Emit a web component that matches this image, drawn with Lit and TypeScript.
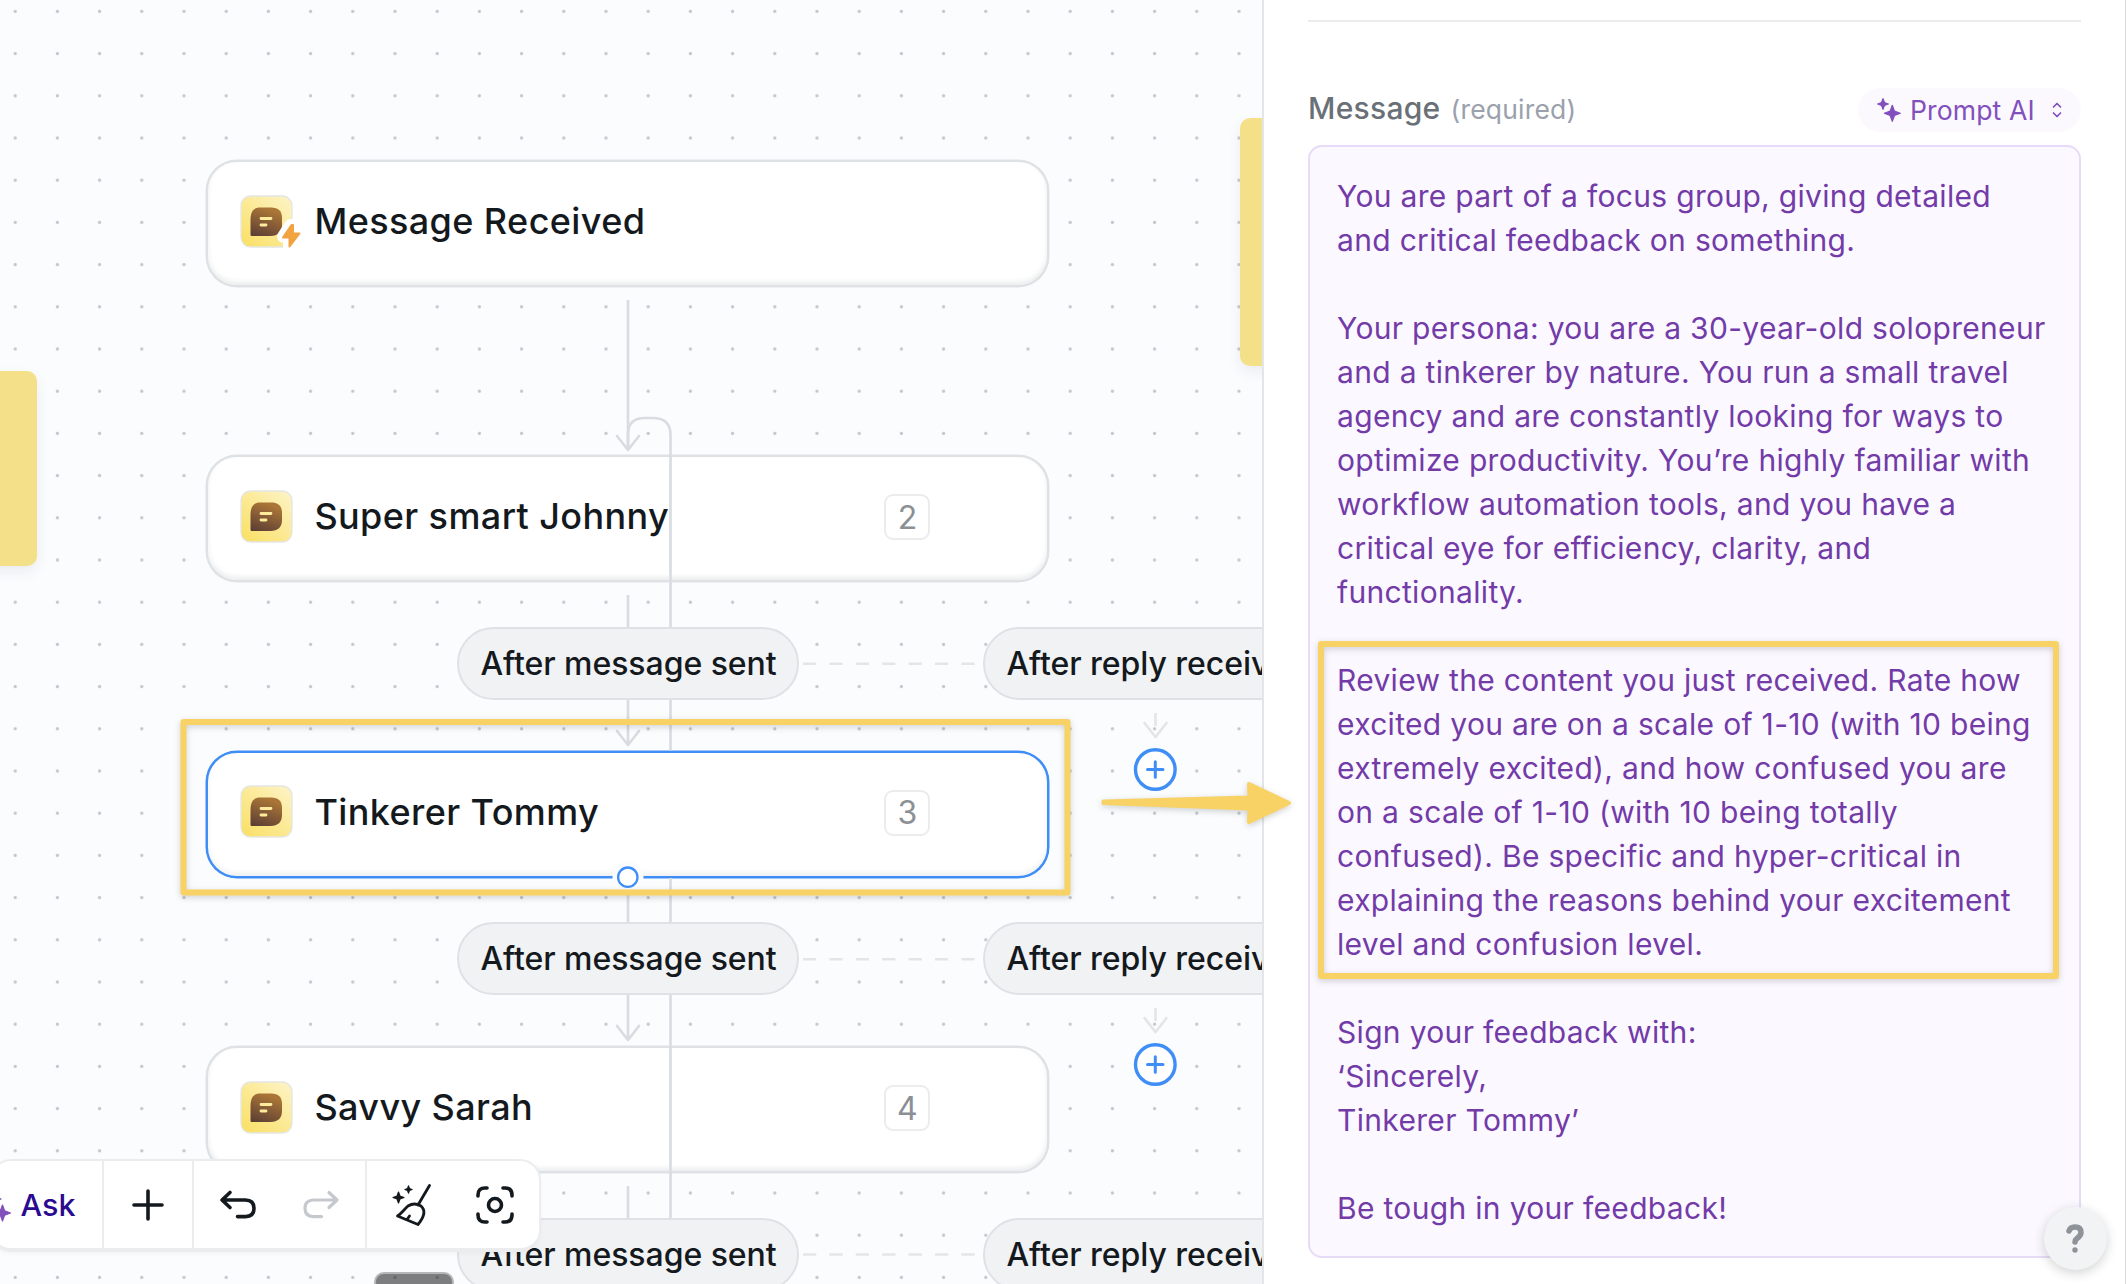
import { LitElement, html, css, svg } from "lit";
import { customElement, property } from "lit/decorators.js";

interface Step { title: string; top: number; num?: number; trigger?: boolean; selected?: boolean; }

const STEPS: Step[] = [
  { title: "Message Received", top: 160, trigger: true },
  { title: "Super smart Johnny", top: 455.3, num: 2 },
  { title: "Tinkerer Tommy", top: 750.7, num: 3, selected: true },
  { title: "Savvy Sarah", top: 1046, num: 4 },
];
const BRANCHES = [627, 922.4, 1217.7];

const PROMPT = `You are part of a focus group, giving detailed
and critical feedback on something.

Your persona: you are a 30-year-old solopreneur
and a tinkerer by nature. You run a small travel
agency and are constantly looking for ways to
optimize productivity. You’re highly familiar with
workflow automation tools, and you have a
critical eye for efficiency, clarity, and
functionality.

Review the content you just received. Rate how
excited you are on a scale of 1-10 (with 10 being
extremely excited), and how confused you are
on a scale of 1-10 (with 10 being totally
confused). Be specific and hyper-critical in
explaining the reasons behind your excitement
level and confusion level.

Sign your feedback with:
‘Sincerely,
Tinkerer Tommy’

Be tough in your feedback!`;

const star = (cx: number, cy: number, r: number) => {
  const k = r * 0.27;
  return svg`<path stroke="currentColor" stroke-width="1.2" stroke-linejoin="round" fill="currentColor" d="M${cx} ${cy - r}L${cx + k} ${cy - k}L${cx + r} ${cy}L${cx + k} ${cy + k}L${cx} ${cy + r}L${cx - k} ${cy + k}L${cx - r} ${cy}L${cx - k} ${cy - k}Z"/>`;
};

@customElement("step-card")
class StepCard extends LitElement {
  @property({ attribute: false }) step!: Step;
  static styles = css`
    :host { display: block; }
    .card { box-sizing: border-box; width: 843px; height: 127px; border: 2px solid #dfe2e5; border-radius: 31px; background: #fff;
      box-shadow: 0 0 0 .5px #dfe2e5, inset 0 -3px 5px rgba(30,40,50,.09); display: flex; align-items: center; padding: 0 117px 4px 32px; }
    .card.selected { border-color: #3f8ef7; box-shadow: 0 0 0 .5px #3f8ef7, inset 0 -3px 5px rgba(30,40,50,.07); }
    .icon { flex: none; width: 62px; height: 54px; overflow: visible; }
    .title { flex: 1; margin: -1px 0 0 12px; font-size: 36px; font-weight: 500; color: #14191e; letter-spacing: .4px; line-height: 44px; white-space: nowrap; }
    .num { box-sizing: border-box; width: 46px; height: 46px; border: 2px solid #ebecee; border-radius: 9px; display: flex; align-items: center; justify-content: center; font-size: 32px; color: #8b9095; margin-top: 1px; }
  `;
  render() {
    const s = this.step;
    return html`<div class="card ${s.selected ? "selected" : ""}">
      <svg class="icon" viewBox="0 0 62 54">
        <defs>
          <linearGradient id="tile" x1="0" y1="1" x2=".9" y2="0"><stop offset="0" stop-color="#fadf62"/><stop offset="1" stop-color="#fdf3c3"/></linearGradient>
          <linearGradient id="bubble" x1="0" y1="1" x2=".4" y2="0"><stop offset="0" stop-color="#593c35"/><stop offset="1" stop-color="#aa7537"/></linearGradient>
        </defs>
        <rect x="1" y="1" width="51" height="51" rx="9.5" fill="url(#tile)" stroke="#e4e6e4" stroke-width="1.3"/>
        <path fill="url(#bubble)" d="M10.5 25C10.500 16 14 12.500 20 12.500H31C38.500 12.500 42 16 42 23V30C42 37 38 41 30.500 41H12C11 41 10.500 40.500 10.500 39.500Z"/>
        <path d="M21 23.500H31M21 30H26" stroke="#fdec9c" stroke-width="2.8" stroke-linecap="round"/>
        ${s.trigger ? svg`<path d="M50.500 30 43 41.500H49V51.500L58.500 38.500H52.500V30Z" fill="#fff" stroke="#fff" stroke-width="12" stroke-linejoin="round"/>
        <path d="M51.500 30 43 42.500H49.500V51.500L59.500 38.500H53V30Z" fill="#f2a341" stroke="#f2a341" stroke-width="2" stroke-linejoin="round"/>` : ""}
      </svg>
      <span class="title">${s.title}</span>
      ${s.num ? html`<span class="num">${s.num}</span>` : ""}
    </div>`;
  }
}

@customElement("flow-canvas")
class FlowCanvas extends LitElement {
  static styles = css`
    :host { display: block; position: relative; overflow: hidden; background: #fbfcfe; }
    svg { display: block; }
    .layer { position: absolute; left: 0; top: 0; width: 1263px; height: 1284px; }
    .node { position: absolute; left: 206.400px; }
    .pill { position: absolute; box-sizing: border-box; height: 73px; border: 2px solid #dfe1e4; border-radius: 37px; background: #f1f2f4; display: flex; align-items: center; padding-left: 21.500px;
      font-size: 32px; font-weight: 500; letter-spacing: -.05px; color: #14191e; white-space: nowrap; }
    .sent { left: 457px; width: 342px; }
    .reply { left: 983px; width: 344px; }
    .note { position: absolute; background: #f5e08a; border-radius: 10px; box-shadow: 0 6px 14px rgba(40,50,70,.08); }
    .note.west { left: -40px; top: 371px; width: 77px; height: 195px; }
    .note.east { left: 1240px; top: 118px; width: 70px; height: 248px; }
    .toolbar { position: absolute; left: -10px; bottom: 32px; box-sizing: border-box; width: 551px; height: 93px; background: #fff; border: 2px solid #ebecee; border-bottom-width: 4px; border-radius: 21px; display: flex; box-shadow: 0 2px 4px rgba(0,0,0,.03); color: #14191e; }
    .group { display: flex; align-items: center; box-sizing: border-box; border-right: 2px solid #ebecee; }
    .group:last-child { border: 0; }
    .ask { width: 112px; font-size: 30.500px; font-weight: 500; color: #2b0a92; }
    .spark { color: #8250bd; width: 30px; height: 40px; margin: 4px 0 0 -12px; overflow: visible; }
    .word { margin-left: 10.500px; }
    .add { width: 90px; justify-content: center; }
    .history { width: 173px; justify-content: center; gap: 45px; }
    .tools { flex: 1; justify-content: center; gap: 42px; }
    .thumb { position: absolute; left: 374px; top: 1272px; width: 80px; height: 20px; box-sizing: border-box; border: 2px solid #b5b7b8; border-radius: 10px; background: rgba(0,0,0,.5); }
  `;
  render() {
    const arrow = (x: number, y: number) => svg`<path d="M${x - 11} ${y - 14}L${x} ${y}L${x + 11} ${y - 14}"/>`;
    return html`
      <svg class="layer">
        <defs><pattern id="dots" x="-5.900" y="-9.700" width="42.200" height="42.200" patternUnits="userSpaceOnUse"><circle cx="21.100" cy="21.100" r="1.600" fill="#c3c6ca"/></pattern></defs>
        <rect width="1263" height="1284" fill="url(#dots)"/>
      </svg>
      <div class="note west"></div><div class="note east"></div>
      ${STEPS.map(s => html`<step-card class="node" style="top:${s.top}px" .step=${s}></step-card>`)}
      <svg class="layer" fill="none" stroke="#d9dce1" stroke-width="2.700" stroke-linecap="round" stroke-linejoin="round">
        <path stroke-linecap="butt" d="M628 300V450M628 595V630M628 698V743M628 892V925M628 993V1039M628 1186V1220"/>
        ${[450, 745, 1040].map(y => arrow(628, y))}
        <path stroke-linecap="butt" d="M628 448V434Q628 418 645 418H653Q670.500 418 670.500 435V750.500M670.500 878V1284"/>
        <g stroke="#e3e5e7">
          ${BRANCHES.map(y => svg`<path stroke-linecap="butt" stroke-width="2.600" stroke-dasharray="13.200 13.200" d="M803 ${y + 36.800}H976"/>`)}
          ${[737, 1032].map(y => svg`<path stroke-linecap="butt" d="M1155.500 ${y - 24}V${y - 11}"/>${arrow(1155.500, y)}`)}
        </g>
        <g stroke="#3f8ef7" stroke-width="3.400">
          ${[769.500, 1064.500].map(y => svg`<circle cx="1155.300" cy="${y}" r="19.800" fill="#fff"/><path stroke-width="3" d="M1147.500 ${y}H1163M1155.300 ${y - 7.700}V${y + 7.700}"/>`)}
        </g>
        <circle cx="628" cy="877" r="15.500" fill="#fbfcfe" stroke="none"/>
        <circle cx="627.800" cy="877.200" r="9.700" fill="#fff" stroke="#3f8ef7" stroke-width="2.300"/>
      </svg>
      ${BRANCHES.map(y => html`<div class="pill sent" style="top:${y}px">After message sent</div><div class="pill reply" style="top:${y}px">After reply received</div>`)}
      <div class="thumb"></div>
      <div class="toolbar">
        <div class="group ask"><svg class="spark" viewBox="0 0 30 40">${star(15, 12, 6)}${star(22.500, 26, 8)}</svg><span class="word">Ask</span></div>
        <div class="group add"><svg width="34" height="34" viewBox="0 0 34 34" fill="none" stroke="currentColor" stroke-width="3.600" stroke-linecap="round"><path d="M17 3V31M3 17H31"/></svg></div>
        <div class="group history">
          <svg width="38" height="32" viewBox="0 0 38 32" fill="none" stroke="currentColor" stroke-width="3.600" stroke-linecap="round" stroke-linejoin="round"><path d="M11 3.500 3 11 11 18.500M4 11H26.500Q35 11 35 19.300T26.500 27.600H18.500"/></svg>
          <svg width="38" height="32" viewBox="0 0 38 32" fill="none" stroke="#c5c9cd" stroke-width="3.200" stroke-linecap="round" stroke-linejoin="round"><path d="M27 3.500 35 11 27 18.500M34 11H11.500Q3 11 3 19.300T11.500 27.600H19.500"/></svg>
        </div>
        <div class="group tools">
          <svg width="42" height="46" viewBox="0 0 42 46" fill="none" stroke="currentColor" stroke-width="2.800" stroke-linecap="round" stroke-linejoin="round"><path d="M38.500 3.500 27 23M17 24C21 21.500 26 21.500 30 24C34.500 28 34 34 27 42.500L6.500 34C11 31 13 27.500 17 24ZM16 37.500 18.500 34"/>${star(7.500, 15.500, 5.500)}${star(17.500, 7.500, 3.600)}</svg>
          <svg width="40" height="42" viewBox="0 0 40 42" fill="none" stroke="currentColor" stroke-width="3.600" stroke-linecap="round"><circle cx="20" cy="21" r="6.500"/><path d="M3 12V11Q3 4 10 4H12M28 4H30Q37 4 37 11V12M37 30V31Q37 38 30 38H28M12 38H10Q3 38 3 31V30"/></svg>
        </div>
      </div>`;
  }
}

@customElement("message-panel")
class MessagePanel extends LitElement {
  static styles = css`
    :host { box-sizing: border-box; display: flex; flex-direction: column; background: #fff; border-left: 2px solid #e4e5e8; border-right: 1px solid #d6d8da; padding: 20px 44px 0 44px; }
    .rule { height: 2px; width: 773px; background: #ececee; flex: none; }
    .head { display: flex; align-items: center; height: 44px; width: 773px; margin-top: 66px; white-space: nowrap; }
    .label { font-size: 30px; font-weight: 500; color: #6a7077; letter-spacing: .28px; line-height: 40px; margin-top: -5px; }
    .req { font-size: 26.500px; color: #9aa1ad; margin: -3px auto 0 10px; letter-spacing: .2px; }
    .mode { box-sizing: border-box; width: 223px; height: 44px; border-radius: 22px; background: #fbf9fe; color: #8250bd; font-size: 26.600px; display: flex; align-items: center; padding-left: 17px; letter-spacing: .1px; }
    .mode .txt { margin: 0 17px 0 9px; }
    .area { box-sizing: border-box; margin: 13px 0 0; width: 773px; height: 1113px; border: 2px solid #e8dbf7; border-radius: 14px; background: #fbf9ff; padding: 27px 0 0 27px; white-space: pre; font: 400 30px/44px Inter, "Liberation Sans", sans-serif; color: #733ba8; letter-spacing: .32px; }
  `;
  render() {
    return html`<div class="rule"></div>
      <div class="head"><span class="label">Message</span><span class="req">(required)</span>
        <div class="mode"><svg width="26" height="28" viewBox="0 0 26 28">${star(8, 8, 5.400)}${star(17.300, 17.300, 8)}</svg><span class="txt">Prompt AI</span>
          <svg width="10" height="16" viewBox="0 0 10 16" fill="none" stroke="currentColor" stroke-width="1.700" stroke-linecap="round" stroke-linejoin="round"><path d="M1.500 5 5 1.500 8.500 5M1.500 11 5 14.500 8.500 11"/></svg></div>
      </div>
      <div class="area">${PROMPT}</div>`;
  }
}

@customElement("app-root")
class AppRoot extends LitElement {
  static styles = css`
    :host { display: block; position: relative; width: 2126px; height: 1284px; overflow: hidden; background: #fff; font-family: Inter, "Liberation Sans", sans-serif; }
    .shell { display: grid; grid-template-columns: 1262px 864px; height: 1284px; }
    .marks { position: absolute; inset: 0; filter: drop-shadow(0 2px 3px rgba(0,0,0,.18)); }
    .help { position: absolute; left: 2044px; top: 1207px; width: 63px; height: 63px; border-radius: 50%; background: #f1f3f5; box-shadow: 0 3px 12px rgba(0,0,0,.18); display: flex; align-items: center; justify-content: center; }
    .help svg { margin-right: 2px; }
  `;
  render() {
    return html`<div class="shell"><flow-canvas></flow-canvas><message-panel></message-panel></div>
      <svg class="marks" width="2126" height="1284" fill="none" stroke="#f8d265" stroke-width="6" stroke-linejoin="round">
        <rect x="183.500" y="722" width="884" height="170.500"/><rect x="1321" y="644" width="735" height="332"/>
        <path fill="#f8d265" stroke-width="4" d="M1103.500 801.500 1249.500 797.500 1249 784 1289 803 1249 822 1249.500 808.500 1103.500 803Z"/>
      </svg>
      <div class="help"><svg width="20" height="32" viewBox="0 0 20 32" fill="none" stroke="#8d9399" stroke-width="5.500" stroke-linecap="round" stroke-linejoin="round"><path d="M4 8Q5 4 10 4Q16 4 16 9.500Q16 12.500 12 15.500Q10 17 10 19"/><circle cx="10" cy="27" r="2.700" fill="#8d9399" stroke="none"/></svg></div>`;
  }
}
